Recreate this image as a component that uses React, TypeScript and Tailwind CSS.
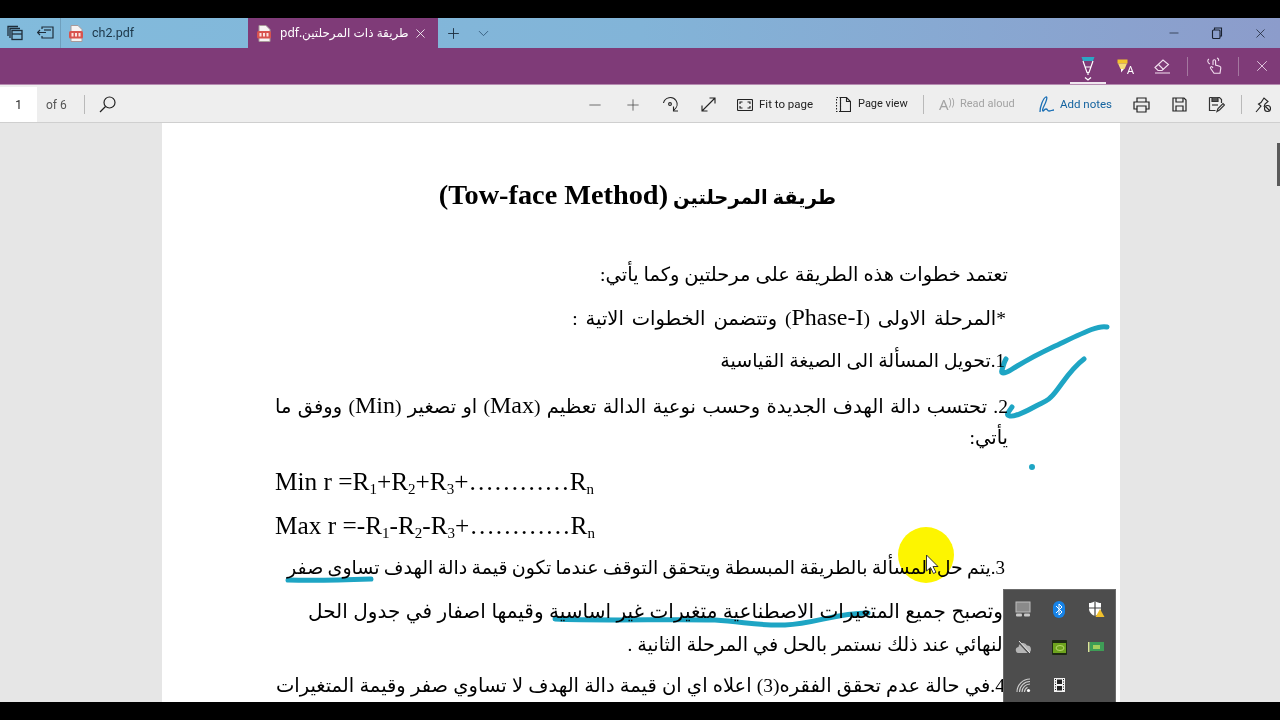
import React from "react";
import { Minus, Plus, X, ChevronDown } from "lucide-react";

const serif = "font-['Liberation_Serif','DejaVu_Sans',serif]";

const PdfIcon = () => (
  <svg width="16" height="17" viewBox="0 0 16 17">
    <path d="M3 .5h7l4 4v12H3z" fill="#f7f3f3" stroke="#a99a9a" />
    <rect x="1" y="6" width="14" height="7.500" rx="1.500" fill="#d8544f" />
    <path d="M3.500 8h2v3.500h-2zM7 8h2v3.500H7zM10.500 8h2v3.500h-2z" fill="#fbe3e1" />
  </svg>
);

const Line = ({ className, children }: { className: string; children: React.ReactNode }) => (
  <p dir="rtl" className={`whitespace-nowrap text-black leading-[30px] ${serif} ${className}`}>
    {children}
  </p>
);

const Latin = ({ children }: { children: React.ReactNode }) => <span className="text-[24px]">{children}</span>;

const Sub = ({ children }: { children: React.ReactNode }) => (
  <sub className="text-[15px] leading-none">{children}</sub>
);

const ToolLabel = ({ className, children }: { className: string; children: React.ReactNode }) => (
  <span className={`whitespace-nowrap font-['Roboto',sans-serif] ${className}`}>{children}</span>
);

const TrayIcon = ({ children }: { children: React.ReactNode }) => (
  <div className="flex items-center justify-center h-[38px]">{children}</div>
);

export default function App() {
  return (
    <div className="w-[1280px] h-[720px] overflow-hidden bg-black flex flex-col font-['Noto_Sans','DejaVu_Sans',sans-serif]">
      <div className="h-[18px] shrink-0" />

      {/* tab strip */}
      <div className="h-[30px] shrink-0 flex items-center bg-gradient-to-r from-[#82bbdc] via-[#82b4d8] to-[#8c9ccb]">
        <div className="w-[61px] h-full flex items-center gap-[14px] pl-[7px] border-r border-[#6f9fbd]">
          <svg width="16" height="16" viewBox="0 0 16 16" fill="none" stroke="#1f2d3a" strokeWidth="1.300">
            <path d="M1 11V1.500h10" />
            <path d="M3 13V3.500h10" />
            <rect x="5" y="5.500" width="10" height="9" />
            <path d="M5 9h10" />
          </svg>
          <svg width="17" height="14" viewBox="0 0 17 14" fill="none" stroke="#1f2d3a" strokeWidth="1.200">
            <path d="M5 3V1h11v11H5v-2" />
            <path d="M9 6.500H.5M3 4 .5 6.500 3 9" />
            <path d="M7 4h7" />
          </svg>
        </div>
        <div className="w-[187px] h-full flex items-center gap-[8px] pl-[7px]">
          <PdfIcon />
          <span className="text-[12.500px] font-['Roboto',sans-serif] text-[#1c3648]">ch2.pdf</span>
        </div>
        <div className="w-[190px] h-full flex items-center bg-[#7f3b78] pl-2 pr-[10px]">
          <PdfIcon />
          <span className="ml-2 text-xs text-white whitespace-nowrap" dir="rtl">طريقة ذات المرحلتين.pdf</span>
          <X size={15} className="ml-auto text-white" strokeWidth={1.300} />
        </div>
        <Plus size={17} className="ml-[7px] text-[#1c2f40]" strokeWidth={1.300} />
        <ChevronDown size={17} className="ml-[13px] text-[#2f5474]" strokeWidth={1.200} />
        <div className="ml-auto flex items-center gap-[30px] pr-[12px] text-[#1a2230]">
          <Minus size={14} strokeWidth={1.200} />
          <svg width="12" height="12" viewBox="0 0 12 12" fill="none" stroke="currentColor" strokeWidth="1.100">
            <rect x="1.500" y="3" width="7.500" height="8.500" rx="1" />
            <path d="M3.500 3V1h7v8H9" />
          </svg>
          <X size={15} strokeWidth={1.200} />
        </div>
      </div>

      {/* ink bar */}
      <div className="h-[37px] shrink-0 bg-[#7f3b78] flex items-center justify-end pr-[9px] border-b border-[#b58bb0]">
        <div className="w-[36px] h-full flex flex-col items-center justify-end border-b-2 border-[#f0e6ef]">
          <svg width="14" height="26" viewBox="0 0 14 26">
            <path d="M.5 1h13l-1.500 4H2z" fill="#2ba6c4" />
            <path d="M2 5 6 16.500h2L12 5M4.500 11h5M7 16.500V19" fill="none" stroke="#fff" strokeWidth="1.200" />
            <path d="M4 21.500 7 24l3-2.500" fill="none" stroke="#fff" strokeWidth="1.300" />
          </svg>
        </div>
        <div className="ml-[11px] w-[18px] flex items-end">
          <svg className="shrink-0" width="11" height="15" viewBox="0 0 11 15">
            <path d="M.5 .5h10v4H.5z" fill="#f3c32c" />
            <path d="M1 4.500h9L7.500 10h-4z" fill="#f6dc7a" />
            <path d="M4 10h3l-3 3.500z" fill="#fff" />
          </svg>
          <span className="text-[11px] leading-none text-white -ml-[1px] -mb-[1px]">A</span>
        </div>
        <svg className="ml-[19px]" width="17" height="16" viewBox="0 0 17 16" fill="none" stroke="#f3dff0" strokeWidth="1.100">
          <path d="M1 9.500 9 2l5.500 4.500L8 12.500H4z" />
          <path d="M4.500 6.500l5 5M1 15h15" />
        </svg>
        <div className="ml-[16px] w-px h-[19px] bg-[#a578a0]" />
        <svg className="ml-[18px]" width="18" height="18" viewBox="0 0 18 18" fill="none" stroke="#f3dff0" strokeWidth="1.100">
          <path d="M7 8V4a1.300 1.300 0 0 1 2.600 0v4l4 1.200c1 .3 1.400 1 1.200 2l-.8 5H8l-3.500-5c-.5-1 .8-2 1.700-1.200L7 11" />
          <path d="M4 7C1.500 6 1 3 3 2M11 1c1.500.5 2 2 1.500 3" />
        </svg>
        <div className="ml-[14px] w-px h-[19px] bg-[#a578a0]" />
        <X size={18} className="ml-[14px] text-[#f3dff0]" strokeWidth={1.100} />
      </div>

      {/* pdf toolbar */}
      <div className="h-[38px] shrink-0 bg-[#eeeeee] flex items-center pt-[2px] border-b border-[#cfcfcf] text-[#222]">
        <div className="w-[37px] h-full bg-white flex items-center justify-center text-xs font-['Roboto',sans-serif]">1</div>
        <ToolLabel className="ml-[9px] w-[22px] text-xs text-[#555]">of 6</ToolLabel>
        <div className="ml-[16px] w-px h-[19px] bg-[#b9b9b9]" />
        <svg className="ml-[14px] shrink-0" width="17" height="17" viewBox="0 0 17 17" fill="none" stroke="#222" strokeWidth="1.200">
          <circle cx="10.500" cy="6.500" r="5.500" />
          <path d="M6.500 10.500 1 16" />
        </svg>

        <div className="ml-[460px] w-[38px] flex justify-center"><Minus size={18} strokeWidth={1} className="text-[#444]" /></div>
        <div className="w-[37px] flex justify-center"><Plus size={18} strokeWidth={1} className="text-[#444]" /></div>
        <div className="w-[38px] flex justify-center">
          <svg width="17" height="18" viewBox="0 0 17 18" fill="none" stroke="#222" strokeWidth="1.100">
            <path d="M1.500 7A7 7 0 0 1 14 4.500c2 3 1.500 7-2.500 10" />
            <path d="M11.500 10.500v4.500H16" />
            <circle cx="8" cy="8" r="1.400" />
          </svg>
        </div>
        <div className="w-[38px] flex justify-center">
          <svg width="15" height="15" viewBox="0 0 15 15" fill="none" stroke="#222" strokeWidth="1.100">
            <path d="M1 14 14 1M8.500 1H14v5.500M1 8.500V14h5.500" />
          </svg>
        </div>
        <svg className="ml-[10px] shrink-0" width="16" height="12" viewBox="0 0 16 12" fill="none" stroke="#222" strokeWidth="1.100">
          <rect x=".5" y=".5" width="15" height="11" rx="1" />
          <path d="M3 5V3h2.500M13 5V3h-2.500M3 7v2h2.500M13 7v2h-2.500" />
        </svg>
        <ToolLabel className="ml-[6px] w-[54px] text-[11.500px] text-[#222]">Fit to page</ToolLabel>
        <svg className="ml-[23px] shrink-0" width="15" height="15" viewBox="0 0 15 15" fill="none" stroke="#222" strokeWidth="1.100">
          <path d="M.5 .5h4v14h-4z" strokeDasharray="1.500 1.500" />
          <path d="M4.500 .5h6l4 4v10h-10zM10.500 .5v4h4" />
        </svg>
        <ToolLabel className="ml-[7px] w-[50px] text-[11px] text-[#222]">Page view</ToolLabel>
        <div className="ml-[15px] w-px h-[19px] bg-[#b9b9b9]" />
        <span className="ml-[15px] w-[17px] text-[15px] text-[#a3a3a3] leading-none whitespace-nowrap">A<span className="text-[10px] align-top">))</span></span>
        <ToolLabel className="ml-[4px] w-[55px] text-[11px] text-[#a3a3a3]">Read aloud</ToolLabel>
        <svg className="ml-[24px] shrink-0" width="16" height="18" viewBox="0 0 16 18" fill="none" stroke="#1a6fb5" strokeWidth="1.300">
          <path d="M1 16c0-5 3-14 6-15 2-.5 0 5-2 9-1 2-2 5-1 5s1-2 3-2 1 2 3 2 3-1 5-1" />
        </svg>
        <ToolLabel className="ml-[5px] w-[52px] text-[11.500px] text-[#14639f]">Add notes</ToolLabel>
        <svg className="ml-[21px] shrink-0" width="17" height="16" viewBox="0 0 17 16" fill="none" stroke="#222" strokeWidth="1.200">
          <path d="M4 5V1h9v4M4 12H1V5h15v7h-3" />
          <path d="M4 9h9v6H4z" />
        </svg>
        <svg className="ml-[22px] shrink-0" width="15" height="15" viewBox="0 0 15 15" fill="none" stroke="#222" strokeWidth="1.200">
          <path d="M1 1h11l2 2v11H1z" />
          <path d="M4 1v4h7V1M4 14V9h7v5" />
        </svg>
        <svg className="ml-[21px] shrink-0" width="17" height="17" viewBox="0 0 17 17" fill="none" stroke="#333" strokeWidth="1.200">
          <path d="M1.500 1.500h10l2 2V7M1.500 1.500v13h6" />
          <path d="M4 1.500v4h6v-4" fill="#555" />
          <path d="M4 9h6" />
          <path d="M9 15.500l1-3 5-5 1.500 1.500-5 5z" />
        </svg>
        <div className="ml-[16px] w-px h-[19px] bg-[#b9b9b9]" />
        <svg className="ml-[13px] shrink-0" width="17" height="17" viewBox="0 0 17 17" fill="none" stroke="#222" strokeWidth="1.100">
          <path d="M1 16 6 10 3.500 8 6 6.500 9 2l4 3.500L10 8l-1 3" />
          <circle cx="12.500" cy="12.500" r="3" />
          <path d="m10.500 10.500 4 4" />
        </svg>
      </div>

      {/* document area */}
      <div className="relative h-[579px] shrink-0 bg-[#e6e6e6] flex justify-center pl-[2px] overflow-hidden">
        <div className="w-[958px] h-full bg-white pl-[113px] pr-[112px] overflow-hidden">
          <p dir="rtl" className={`mt-[55px] pr-[8px] text-center whitespace-nowrap text-[19.500px] leading-[34px] font-bold text-black ${serif}`}>
            طريقة المرحلتين <span className="text-[28.300px]">(Tow-face Method)</span>
          </p>
          <Line className="mt-[45px] text-[19.500px]">تعتمد خطوات هذه الطريقة على مرحلتين وكما يأتي:</Line>
          <Line className="mt-[12px] pr-[2px] text-[19.500px] [word-spacing:3px]">*المرحلة الاولى (<Latin>Phase-I</Latin>) وتتضمن الخطوات الاتية :</Line>
          <Line className="mt-[12px] pr-[3px] text-[19px]">1.تحويل المسألة الى الصيغة القياسية</Line>
          <Line className="mt-[14px] text-[19.500px] [word-spacing:1.400px]">2. تحتسب دالة الهدف الجديدة وحسب نوعية الدالة تعظيم (<Latin>Max</Latin>) او تصغير (<Latin>Min</Latin>) ووفق ما</Line>
          <Line className="mt-[1px] text-[19.500px]">يأتي:</Line>
          <p className={`mt-[13px] text-[25.300px] leading-[30px] text-black whitespace-nowrap ${serif}`}>
            Min r =R<Sub>1</Sub>+R<Sub>2</Sub>+R<Sub>3</Sub>+…………R<Sub>n</Sub>
          </p>
          <p className={`mt-[14px] text-[25.300px] leading-[30px] text-black whitespace-nowrap ${serif}`}>
            Max r =-R<Sub>1</Sub>-R<Sub>2</Sub>-R<Sub>3</Sub>+…………R<Sub>n</Sub>
          </p>
          <Line className="mt-[13px] pr-[3px] text-[19px] [word-spacing:-0.500px]">3.يتم حل المسألة بالطريقة المبسطة ويتحقق التوقف عندما تكون قيمة دالة الهدف تساوى صفر</Line>
          <Line className="mt-[13px] pr-[5px] text-[20px] [word-spacing:0.500px]">وتصبح جميع المتغيرات الاصطناعية متغيرات غير اساسية وقيمها اصفار في جدول الحل</Line>
          <Line className="mt-[4px] text-[19.300px]">النهائي عند ذلك نستمر بالحل في المرحلة الثانية .</Line>
          <Line className="mt-[11px] pr-[3px] text-[19.500px] [word-spacing:0.300px]">4.في حالة عدم تحقق الفقره(3) اعلاه اي ان قيمة دالة الهدف لا تساوي صفر وقيمة المتغيرات</Line>
        </div>

        {/* scrollbar thumb */}
        <div className="absolute right-0 top-[20px] w-[3px] h-[43px] bg-[#5a5a5a]" />

        {/* pen strokes, highlighter, pointer: coordinates are screen pixels */}
        <svg className="absolute inset-0 w-[1280px] h-[579px] pointer-events-none mix-blend-multiply" viewBox="0 123 1280 579" fill="none" stroke="#1ea5c4" strokeWidth="5" strokeLinecap="round" strokeLinejoin="round">
          <circle cx="926" cy="555" r="28" fill="#fdf500" stroke="none" />
          <path d="M1107 327C1098 325 1085 332 1053 347S1012 370 1007 372 1001 373 1002 370 1004 362 1006 359" />
          <path d="M1084 359C1072 368 1066 378 1057 390S1045 401 1036 406 1014 417 1010 416 1007 414 1012 407" />
          <circle cx="1032" cy="467" r="1.500" strokeWidth="3" />
          <path d="M288 580C315 581 345 580 371 579" />
          <path d="M555 619C600 621 670 619 715 620 745 622 760 626 785 625 815 624 835 613 868 613" />
        </svg>
        <svg className="absolute left-[925px] top-[431px]" width="14" height="22" viewBox="0 0 14 22">
          <path d="M1.500 1v16l4-3.500 3 6 2.500-1.200-3-5.800h5z" fill="#fff" stroke="#333" strokeWidth="1" />
        </svg>

        {/* tray overflow */}
        <div className="absolute left-[1003px] top-[466px] w-[113px] h-[113px] bg-[#4d4d4d] border-t border-l border-r border-[#6b6b6b] grid grid-cols-3 content-start px-[1px]">
          <TrayIcon>
            <svg width="16" height="17" viewBox="0 0 16 17">
              <rect x="1" y="1" width="14" height="10" fill="#8a8a8a" stroke="#bdbdbd" />
              <rect x="1" y="12.500" width="6" height="3" rx="1" fill="#c8c8c8" />
              <rect x="9" y="12.500" width="6" height="3" rx="1" fill="#c8c8c8" />
            </svg>
          </TrayIcon>
          <TrayIcon>
            <svg width="12" height="17" viewBox="0 0 12 17">
              <rect width="12" height="17" rx="6" fill="#1683e8" />
              <path d="M3 5l6 6-3 3V3l3 3-6 6" fill="none" stroke="#fff" strokeWidth="1" />
            </svg>
          </TrayIcon>
          <TrayIcon>
            <svg width="18" height="18" viewBox="0 0 18 18">
              <path d="M8 1c2 1.500 4 2 6 2v6c0 3-3 6-6 7-3-1-6-4-6-7V3c2 0 4-.5 6-2z" fill="#fff" />
              <path d="M8 1v15M2 8h12" stroke="#444" strokeWidth="1.200" />
              <path d="M13 9l4.500 8h-9z" fill="#f0c02c" />
            </svg>
          </TrayIcon>
          <TrayIcon>
            <svg width="17" height="13" viewBox="0 0 17 13">
              <path d="M4 12a3 3 0 0 1-.5-6A4.500 4.500 0 0 1 12 4.500 3.800 3.800 0 0 1 13 12z" fill="#b5b5b5" />
              <path d="M3 .5 14 12.500" stroke="#4d4d4d" strokeWidth="1.500" />
              <path d="M4 0 15 12" stroke="#e5e5e5" strokeWidth="1" />
            </svg>
          </TrayIcon>
          <TrayIcon>
            <svg width="15" height="15" viewBox="0 0 15 15">
              <rect width="15" height="15" rx="1" fill="#1d2a12" />
              <rect x="1" y="3" width="13" height="10" fill="#6ea41e" />
              <ellipse cx="8" cy="8" rx="4" ry="2.500" fill="none" stroke="#b7d96a" />
            </svg>
          </TrayIcon>
          <TrayIcon>
            <svg width="16" height="12" viewBox="0 0 16 12">
              <rect x="2" y="1" width="14" height="9" fill="#3e9d56" />
              <rect x="0" y="1" width="1.500" height="10" fill="#d9e89a" />
              <rect x="5" y="4" width="7" height="4" fill="#a5cf5c" />
            </svg>
          </TrayIcon>
          <TrayIcon>
            <svg width="15" height="15" viewBox="0 0 15 15" fill="none" stroke="#cfcfcf" strokeWidth="1.100">
              <path d="M1 14a13 13 0 0 1 13-13M3.500 14A10.500 10.500 0 0 1 14 3.500M6 14a8 8 0 0 1 8-8" />
              <path d="M8.500 14a5.500 5.500 0 0 1 3-4.800" />
              <circle cx="12.500" cy="12.500" r="1.600" fill="#fff" stroke="none" />
            </svg>
          </TrayIcon>
          <TrayIcon>
            <svg width="11" height="14" viewBox="0 0 11 14">
              <rect width="11" height="14" fill="#f2f2f2" />
              <rect x="3" y="1.500" width="5" height="4.500" fill="#222" />
              <rect x="3" y="8" width="5" height="4.500" fill="#222" />
              <path d="M1 1.500h1M1 4h1M1 6.500h1M1 9h1M1 11.500h1M9 1.500h1M9 4h1M9 6.500h1M9 9h1M9 11.500h1" stroke="#222" />
            </svg>
          </TrayIcon>
        </div>
      </div>

      <div className="h-[18px] shrink-0" />
    </div>
  );
}
